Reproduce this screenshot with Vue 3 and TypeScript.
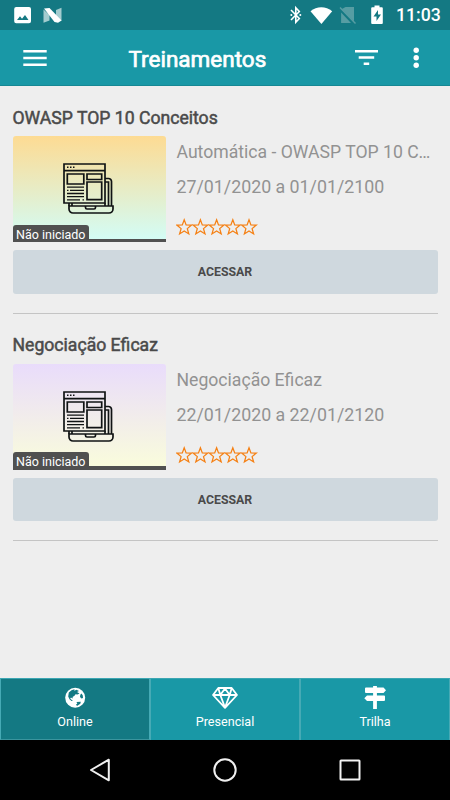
<script setup lang="ts">
interface Training {
  id: number
  title: string
  subtitle: string
  period: string
  status: string
  theme: 'sunrise' | 'lilac'
}

interface Tab {
  id: 'online' | 'presencial' | 'trilha'
  label: string
}

const trainings: Training[] = [
  {
    id: 1,
    title: 'OWASP TOP 10 Conceitos',
    subtitle: 'Automática - OWASP TOP 10 C…',
    period: '27/01/2020 a 01/01/2100',
    status: 'Não iniciado',
    theme: 'sunrise',
  },
  {
    id: 2,
    title: 'Negociação Eficaz',
    subtitle: 'Negociação Eficaz',
    period: '22/01/2020 a 22/01/2120',
    status: 'Não iniciado',
    theme: 'lilac',
  },
]

const tabs: Tab[] = [
  { id: 'online', label: 'Online' },
  { id: 'presencial', label: 'Presencial' },
  { id: 'trilha', label: 'Trilha' },
]

const activeTab: Tab['id'] = 'online'
</script>

<template>
  <div class="screen">
    <div class="status-bar">
      <svg class="status-left" width="50" height="18" viewBox="0 0 50 18">
        <path fill="#fff" fill-rule="evenodd" d="M2.200 1H15a2 2 0 0 1 2 2v12.200a2 2 0 0 1-2 2H2.200a2 2 0 0 1-2-2V3a2 2 0 0 1 2-2ZM3 14h11.500l-3.500-5-3 3.800-2-2.500Z" />
        <path fill="#a3cccf" d="M29.500 3.500 35.500 9v5.500l-6 2.200Z" />
        <path fill="#a3cccf" d="M42 4l5.500-2.300v13L42 11Z" />
        <path fill="#fff" d="M30 2.500 35.500 2 47.600 14.500 44 16.700 40.500 16Z" />
      </svg>
      <div class="status-right">
        <svg width="94" height="20" viewBox="0 0 94 20">
          <path fill="none" stroke="#fff" stroke-width="1.600" d="M1 5 9.300 13.500 5.800 17.300V2.700L9.300 6.500 1 15" />
          <circle cx="1.300" cy="10" r="1" fill="#fff" />
          <circle cx="10.300" cy="10" r="1" fill="#fff" />
          <path fill="#fff" d="M20.500 6.300C26.700 1 35.900 1 42.200 6.300L31.400 19Z" />
          <path fill="#579da3" d="M55.500 2h8.500v14.300L51.100 4.500ZM51.100 7.500 61 18h-9.900Z" />
          <path stroke="#579da3" stroke-width="1.400" d="M50 2.500 65.500 18.500" />
          <path fill="#fff" fill-rule="evenodd" d="M84.500 .5h5v1.800h2.300q1 0 1 1V18q0 1-1 1h-9.600q-1 0-1-1V3.300q0-1 1-1h2.300ZM88 5 83.500 11.500H86.500V16L91 9.500H88Z" />
        </svg>
        <span class="clock">11:03</span>
      </div>
    </div>

    <header class="app-bar">
      <svg width="24" height="18" viewBox="0 0 24 18" fill="#fff">
        <path d="M.3 1h23.400v2.400H.3ZM.3 7.800h23.400v2.400H.3ZM.3 14.600h23.400V17H.3Z" />
      </svg>
      <h1>Treinamentos</h1>
      <div class="actions">
        <svg width="24" height="18" viewBox="0 0 24 18" fill="#fff">
          <path d="M0 1h23v2.500H0ZM3.700 7.300h15.500v2.500H3.700ZM8.700 13.500h5.500V16H8.700Z" />
        </svg>
        <svg width="6" height="22" viewBox="0 0 6 22" fill="#fff">
          <circle cx="3.200" cy="3.300" r="2.700" /><circle cx="3.200" cy="10.700" r="2.700" /><circle cx="3.200" cy="18.200" r="2.700" />
        </svg>
      </div>
    </header>

    <main class="list">
      <article v-for="item in trainings" :key="item.id" class="card">
        <h2>{{ item.title }}</h2>
        <div class="summary">
          <div class="thumb" :class="item.theme">
            <svg class="course-icon" width="51" height="51" viewBox="0 0 51 51" fill="none" stroke="#101314" stroke-width="1.700">
              <path d="M1 1h41v39H1ZM1 7.600h41M4.300 11h16.500v10H4.300ZM24 11h14.700v5.500H24ZM24 19h14.700v17.700H24Z" />
              <path d="M4 4.300h1.500M7 4.300h1.500M10 4.300h1.500" stroke-width="1.500" />
              <path d="M4 24.200h17M4 27.300h1.500M7 27.300h14M4 30.500h17M4 33.700h17M4 36.800h13M19.500 36.800h1.500" stroke-width="1.300" />
              <path d="M42 15.500h3.500a3 3 0 0 1 3 3V43M42 19h3.500v24M6 40v3M9 40v3M42 40v3" />
              <path d="M6 43h44v3a4 4 0 0 1-4 4H10a4 4 0 0 1-4-4ZM22.500 43v1.500q0 1.500 1.500 1.500h7q1.500 0 1.500-1.500V43" />
            </svg>
            <span class="status">{{ item.status }}</span>
            <div class="progress"></div>
          </div>
          <div class="details">
            <p class="subtitle">{{ item.subtitle }}</p>
            <p>{{ item.period }}</p>
            <svg class="stars" width="82" height="18" viewBox="0 0 82 18">
              <path
                v-for="n in 5"
                :key="n"
                :transform="`translate(${(n - 1) * 16.2} 0)`"
                d="M8.200 1.800 10.100 7 15.500 7.100 11.300 10.600 12.800 15.900 8.200 12.900 3.600 15.900 5.100 10.600 .9 7.100 6.300 7Z"
              />
            </svg>
          </div>
        </div>
        <button type="button">ACESSAR</button>
      </article>
    </main>

    <nav class="tabs">
      <a v-for="tab in tabs" :key="tab.id" class="tab" :class="{ active: tab.id === activeTab }">
        <svg v-if="tab.id === 'online'" width="28" height="24" viewBox="0 0 28 24">
          <circle cx="14.200" cy="11.700" r="10" fill="#fff" />
          <path fill="#147983" d="M7.800 6.500 10.500 4.300 13.500 3.300 13.300 4.700 15.500 3.800 18 5 16 6 18.500 7.500 16.500 8.500 14.500 8.200 13.500 9.800 11.500 11 12 12.500 10.300 11.800 9 12 10.500 13.700 12 15 10.500 15 8.500 13.300 7.200 10.500ZM20.500 7.500 21.800 9.500 22 12 20.500 12.500 19 11 19.300 8.800ZM15.500 16l4.300-.2-.5 2-3.300 2.200-1-1.500 1.300-.8Z" />
        </svg>
        <svg v-else-if="tab.id === 'presencial'" width="28" height="24" viewBox="0 0 28 24">
          <path fill="none" stroke="#fff" stroke-width="1.800" stroke-linejoin="round" d="M7.300 2h13.400L26 9 14 21.800 2 9ZM2 9h24M7.300 2 9.300 9 14 21.500 18.700 9l2-7M9.300 9 14 2.500 18.700 9" />
        </svg>
        <svg v-else width="28" height="24" viewBox="0 0 28 24" fill="#fff">
          <path d="M12.100 0h3.800v23h-3.800Z" />
          <path d="M5 1.500H22.500L25 4.200 22.500 6.900H5q-1 0-1-1V2.500q0-1 1-1ZM6 9.500h17q1 0 1 1v3.400q0 1-1 1H6L3.300 12.200Z" />
        </svg>
        <span>{{ tab.label }}</span>
      </a>
    </nav>

    <div class="system-nav">
      <svg width="28" height="28" viewBox="0 0 28 28"><path d="M22.800 3.700V24.300L5 14Z" /></svg>
      <svg width="28" height="28" viewBox="0 0 28 28"><circle cx="14" cy="14" r="10.700" /></svg>
      <svg width="28" height="28" viewBox="0 0 28 28"><rect x="4.500" y="4.500" width="19" height="19" rx=".5" /></svg>
    </div>
  </div>
</template>

<style>
body {
  margin: 0;
}
</style>

<style scoped>
.screen {
  display: flex;
  flex-direction: column;
  width: 450px;
  height: 800px;
  overflow: hidden;
  background: #eee;
  font-family: Roboto, sans-serif;
  color: #4a4a4a;
}
svg {
  display: block;
  flex: none;
}
.status-bar {
  display: flex;
  flex: none;
  align-items: center;
  justify-content: space-between;
  box-sizing: border-box;
  height: 30px;
  padding: 0 10px 0 14px;
  background: #147983;
}
.status-right {
  display: flex;
  align-items: center;
  gap: 12px;
}
.clock {
  width: 44px;
  font-size: 17.700px;
  font-weight: 500;
  line-height: 32px;
  color: #fff;
  white-space: nowrap;
}
.app-bar {
  display: grid;
  flex: none;
  grid-template-columns: 105.500px 1fr auto;
  align-items: center;
  box-sizing: border-box;
  height: 56px;
  padding: 0 31px 0 23px;
  border-bottom: 1px solid #168894;
  background: #1998a6;
}
h1 {
  margin: 3px 0 0;
  font-size: 22.500px;
  font-weight: 400;
  line-height: 30px;
  color: #fff;
  -webkit-text-stroke: 0.700px currentColor;
}
.actions {
  display: flex;
  align-items: center;
  gap: 34px;
}
.list {
  flex: 1;
  padding: 0 12.500px;
}
.card {
  box-sizing: border-box;
  height: 227.500px;
  padding-top: 19.500px;
  border-bottom: 1px solid #c4c4c4;
}
h2 {
  margin: 0 0 6.500px;
  font-size: 17.620px;
  font-weight: 400;
  line-height: 24px;
  -webkit-text-stroke: 0.500px currentColor;
}
.summary {
  display: flex;
  gap: 10.500px;
  height: 106px;
}
.thumb {
  display: flex;
  flex: none;
  flex-direction: column;
  align-items: flex-start;
  width: 153.500px;
  overflow: hidden;
  border-radius: 3px 3px 0 0;
}
.sunrise {
  background: linear-gradient(#fddb93, #d2fdf8);
}
.lilac {
  background: linear-gradient(#e9dcfb, #fafddb);
}
.course-icon {
  margin: 27px 0 0 50.700px;
}
.status {
  box-sizing: border-box;
  width: 76.500px;
  height: 17.500px;
  margin-top: auto;
  margin-bottom: -3.500px;
  padding-left: 3.500px;
  border-radius: 3px 3px 0 0;
  background: #505050;
  font-size: 12.500px;
  line-height: 19px;
  color: #fff;
  white-space: nowrap;
}
.progress {
  width: 100%;
  height: 3.500px;
  background: #505050;
}
.details {
  flex: 1;
  min-width: 0;
}
.details p {
  margin: 0;
  font-size: 17.800px;
  line-height: 35px;
  color: #929292;
  white-space: nowrap;
}
.details .subtitle {
  margin-top: -1px;
  margin-bottom: -1px;
  font-size: 17.620px;
}
.stars {
  margin-top: 14px;
  margin-left: -1px;
  fill: none;
  stroke: #f58014;
  stroke-width: 1.250;
}
button {
  display: block;
  width: 100%;
  height: 43.500px;
  margin-top: 8px;
  padding: 0;
  border: 0;
  border-radius: 3px;
  background: #cfd8de;
  font: 700 12.300px/45px Roboto, sans-serif;
  color: #4a4a4a;
}
.tabs {
  display: grid;
  flex: none;
  grid-template-columns: repeat(3, 1fr);
  height: 62px;
}
.tab {
  display: flex;
  flex-direction: column;
  align-items: center;
  box-sizing: border-box;
  padding-top: 7px;
  border-top: 1px solid #3ba6b2;
  border-right: 1px solid #46aab5;
  border-left: 1px solid #46aab5;
  background: #1998a6;
  font-size: 12.600px;
  line-height: 20px;
  color: #fff;
}
.tab span {
  margin-top: 2px;
}
.tab.active {
  border-bottom: 1px solid #3b959e;
  background: #147983;
}
.system-nav {
  display: flex;
  flex: none;
  align-items: center;
  justify-content: space-between;
  box-sizing: border-box;
  height: 60px;
  padding: 0 86px;
  background: #000;
}
.system-nav svg {
  fill: none;
  stroke: #f0f0f0;
  stroke-width: 2;
  stroke-linejoin: round;
}
</style>
